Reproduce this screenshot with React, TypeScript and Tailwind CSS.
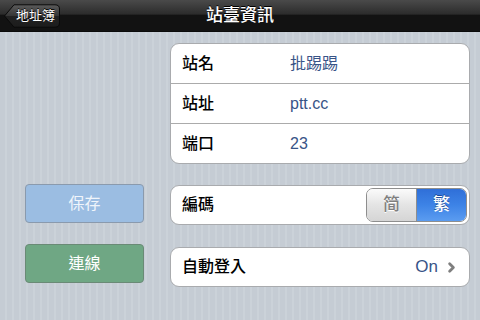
import { ChevronRight } from 'lucide-react';

const font = "font-['Helvetica','Liberation_Sans','Noto_Sans_CJK_TC',sans-serif]";

function BackButton() {
  return (
    <button className="relative ml-[4px] h-[24px] w-[56px] text-[13px] text-white">
      <svg className="absolute inset-0" width="56" height="24" viewBox="0 0 56 24">
        <defs>
          <linearGradient id="bb" x1="0" y1="0" x2="0" y2="1">
            <stop offset="0" stopColor="#5b5b5b" />
            <stop offset="0.5" stopColor="#363636" />
            <stop offset="0.5" stopColor="#222" />
            <stop offset="1" stopColor="#1c1c1c" />
          </linearGradient>
        </defs>
        <path d="M0.5 12 L10 0.8 H51 Q55.5 0.8 55.5 5 V19 Q55.5 23.2 51 23.2 H10 Z" fill="url(#bb)" stroke="#0a0a0a" />
      </svg>
      <span className="relative pl-[7px] [text-shadow:0_-1px_0_#000]">地址簿</span>
    </button>
  );
}

function Row({ label, value, last }: { label: string; value: string; last?: boolean }) {
  return (
    <div className={`flex items-center ${last ? 'h-[39px]' : 'h-[40px] border-b border-[#ababab]'}`}>
      <span className="w-[119px] shrink-0 pl-[11px] text-[16px] font-medium text-black">{label}</span>
      <span className="text-[16px] text-[#385487]">{value}</span>
    </div>
  );
}

export default function App() {
  return (
    <div className={`${font} h-[320px] w-[480px] overflow-hidden bg-[repeating-linear-gradient(90deg,#c5ccd4_0px,#c5ccd4_5px,#cbd2d9_5px,#cbd2d9_7px)]`}>
      <div className="relative flex h-[32px] items-center border-b border-[#0b0b0b] bg-[linear-gradient(#4a4a4a,#2c2c2c_45%,#121212_50%,#121212)]">
        <BackButton />
        <div className="absolute inset-x-0 text-center text-[17px] font-medium text-white [text-shadow:0_-1px_0_#000] pointer-events-none">
          站臺資訊
        </div>
      </div>

      <div className="flex pr-[10px] pt-[11px]">
        <div className="flex w-[170px] shrink-0 flex-col gap-[21px] pl-[25px] pt-[141px]">
          <div className="flex h-[39px] w-[119px] items-center justify-center rounded-[4px] border border-[#8a9aad] bg-[#9bbde2] text-[16px] text-[#f0f5fb]">
            保存
          </div>
          <div className="flex h-[39px] w-[119px] items-center justify-center rounded-[4px] border border-[#6a8a76] bg-[#6fa784] text-[16px] text-white">
            連線
          </div>
        </div>

        <div className="flex flex-1 flex-col">
          <div className="overflow-hidden rounded-[9px] border border-[#a9abae] bg-white">
            <Row label="站名" value="批踢踢" />
            <Row label="站址" value="ptt.cc" />
            <Row label="端口" value="23" last />
          </div>

          <div className="mt-[21px] flex h-[40px] items-center justify-between rounded-[9px] border border-[#a9abae] bg-white pr-[2px]">
            <span className="pl-[11px] text-[16px] font-medium text-black">編碼</span>
            <div className="flex h-[34px] w-[101px] overflow-hidden rounded-[7px] border border-[#8e8e8e]">
              <div className="flex flex-1 items-center justify-center border-r border-[#8e8e8e] bg-[linear-gradient(#fbfbfb,#e4e4e4_50%,#d5d5d5)] text-[17px] font-medium text-[#7f7f7f] [text-shadow:0_1px_0_#fff]">
                简
              </div>
              <div className="flex flex-1 items-center justify-center bg-[linear-gradient(#2f6fd8,#3d83e6_50%,#5b9cf0)] text-[17px] font-medium text-white [text-shadow:0_-1px_0_#1d4a96]">
                繁
              </div>
            </div>
          </div>

          <div className="mt-[22px] flex h-[40px] items-center justify-between rounded-[9px] border border-[#a9abae] bg-white pr-[10px]">
            <span className="pl-[11px] text-[16px] font-medium text-black">自動登入</span>
            <div className="flex items-center gap-[6px]">
              <span className="text-[17px] text-[#385487]">On</span>
              <ChevronRight className="h-[15px] w-[15px] text-[#7f7f7f]" strokeWidth={4.5} />
            </div>
          </div>
        </div>
      </div>
    </div>
  );
}
